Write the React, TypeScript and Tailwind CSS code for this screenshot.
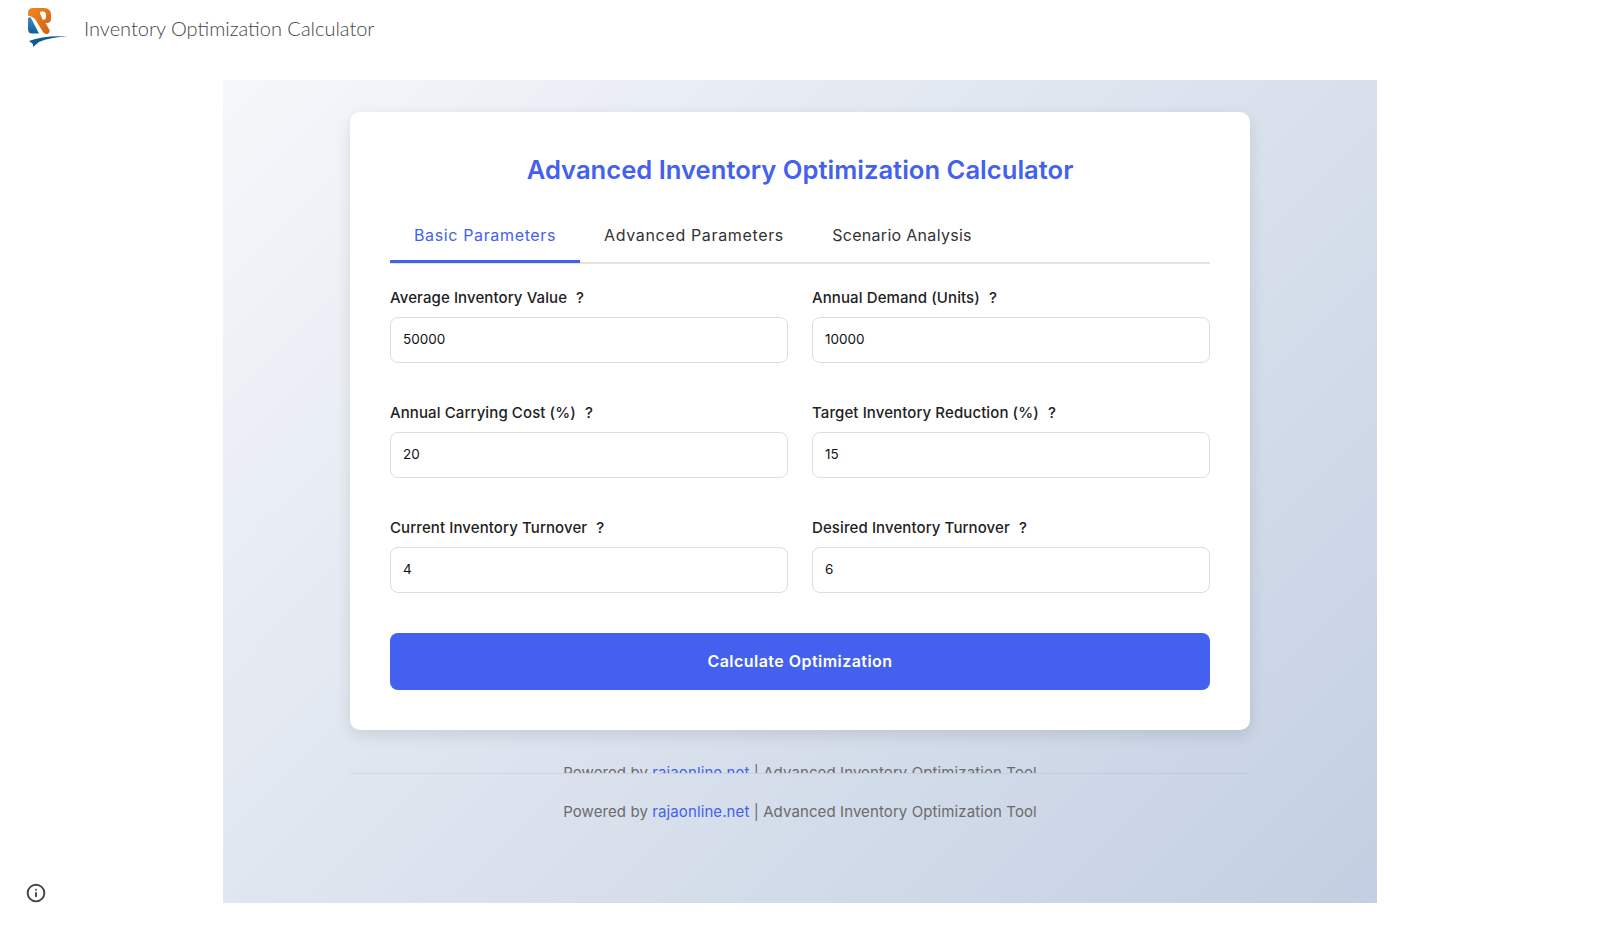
import { Info } from "lucide-react";

const fields = [
  { label: "Average Inventory Value", value: "50000" },
  { label: "Annual Demand (Units)", value: "10000" },
  { label: "Annual Carrying Cost (%)", value: "20" },
  { label: "Target Inventory Reduction (%)", value: "15" },
  { label: "Current Inventory Turnover", value: "4" },
  { label: "Desired Inventory Turnover", value: "6" },
];

const tabs = [
  { name: "Basic Parameters", className: "w-[190px] tracking-[0.65px] border-[#4361ee] text-[#4361ee]" },
  { name: "Advanced Parameters", className: "w-[228px] tracking-[0.65px] border-transparent text-[#333333]" },
  { name: "Scenario Analysis", className: "w-[188px] tracking-[0.3px] border-transparent text-[#333333]" },
];

function Logo() {
  return (
    <svg width="42" height="42" viewBox="0 0 42 42" className="block">
      <defs>
        <linearGradient id="orange" x1="0" y1="0" x2="1" y2="1">
          <stop offset="0" stopColor="#f08a1d" />
          <stop offset="1" stopColor="#cf5f12" />
        </linearGradient>
        <linearGradient id="drop" x1="0" y1="0" x2="0" y2="1">
          <stop offset="0" stopColor="#3f8fc4" />
          <stop offset="1" stopColor="#0f5f96" />
        </linearGradient>
      </defs>
      <path
        fillRule="evenodd"
        fill="url(#orange)"
        d="M0 5 Q0 0 5 0 H16 Q23 0 23 7 V11 Q23 15.500 17.500 15 L21.500 22 Q22 25 19 26 Q17 26.500 15 24 L7 11 Q4 8 0 7.500 Z M12 5.500 L14.500 11.500 Q18 12.500 18 9 V7 Q18 3.500 15 3.500 H13.500 Q11.500 3.500 12 5.500 Z"
      />
      <path fill="url(#drop)" d="M0 10 L2.500 9 L11 25.500 H4 Q0 25.500 0 21 Z" />
      <path fill="#0f5a90" d="M1 33 Q16 27 40 28.500 Q22 29 11 34 L5 39 L5 36 Z" />
    </svg>
  );
}

function Field({ label, value }: { label: string; value: string }) {
  return (
    <div className="flex flex-col">
      <label className="mb-[7px] flex h-[24px] items-center text-[15px] font-medium tracking-[0.1px] text-[#222222]">
        {label}
        <span className="ml-[9px]">?</span>
      </label>
      <input
        readOnly
        value={value}
        className="h-[46px] w-full rounded-[8px] border-[1.5px] border-[#dddddd] bg-white px-[12px] pb-[2px] text-[13.5px] text-[#111111] outline-none"
      />
    </div>
  );
}

export default function App() {
  return (
    <div className="relative h-[926px] overflow-hidden bg-white font-['Inter',sans-serif]">
      <header className="flex h-[80px] items-start pl-[28px] pt-[8px]">
        <Logo />
        <h1 className="ml-[14px] mt-[5px] font-['Lato',sans-serif] text-[20px] font-light text-[#444746]">
          Inventory Optimization Calculator
        </h1>
      </header>

      <main className="mx-auto h-[823px] w-[1154px] bg-[linear-gradient(135deg,#f5f7fa_0%,#c3cfe2_100%)] pt-[32px]">
        <div className="mx-auto w-[900px]">
          <section className="h-[618px] rounded-[10px] bg-white px-[40px] pt-[40px] shadow-[0_5px_15px_rgba(0,0,0,0.1)]">
            <h2 className="text-center text-[25.6px] font-semibold leading-[36px] text-[#4361ee]">
              Advanced Inventory Optimization Calculator
            </h2>

            <div className="mt-[20px] flex border-b-2 border-[#e4e4e4]">
              {tabs.map((tab) => (
                <button
                  key={tab.name}
                  className={`-mb-[1px] h-[55px] border-b-[3px] pt-[2px] text-center text-[16px] ${tab.className}`}
                >
                  {tab.name}
                </button>
              ))}
            </div>

            <div className="mt-[22px] grid grid-cols-2 gap-x-[24px] gap-y-[38px]">
              {fields.map((field) => (
                <Field key={field.label} label={field.label} value={field.value} />
              ))}
            </div>

            <button className="mt-[40px] h-[57px] w-full rounded-[8px] bg-[#4361ee] pb-[2px] text-[16px] font-semibold tracking-[0.46px] text-white">
              Calculate Optimization
            </button>
          </section>

          <div className="h-[43px] overflow-hidden pt-[32px] text-center text-[15px] leading-[22px] tracking-[0.1px] text-[#6b6b6b]">
            Powered by <a className="text-[#4361ee]">rajaonline.net</a> | Advanced Inventory Optimization Tool
          </div>
          <div className="border-t border-[rgba(0,0,0,0.05)] pt-[27px] text-center text-[15px] leading-[22px] tracking-[0.1px] text-[#6b6b6b]">
            Powered by <a className="text-[#4361ee]">rajaonline.net</a> | Advanced Inventory Optimization Tool
          </div>
        </div>
      </main>

      <Info strokeWidth={2.3} className="absolute left-[26px] top-[883px] h-[20px] w-[20px] text-[#444746]" />
    </div>
  );
}
